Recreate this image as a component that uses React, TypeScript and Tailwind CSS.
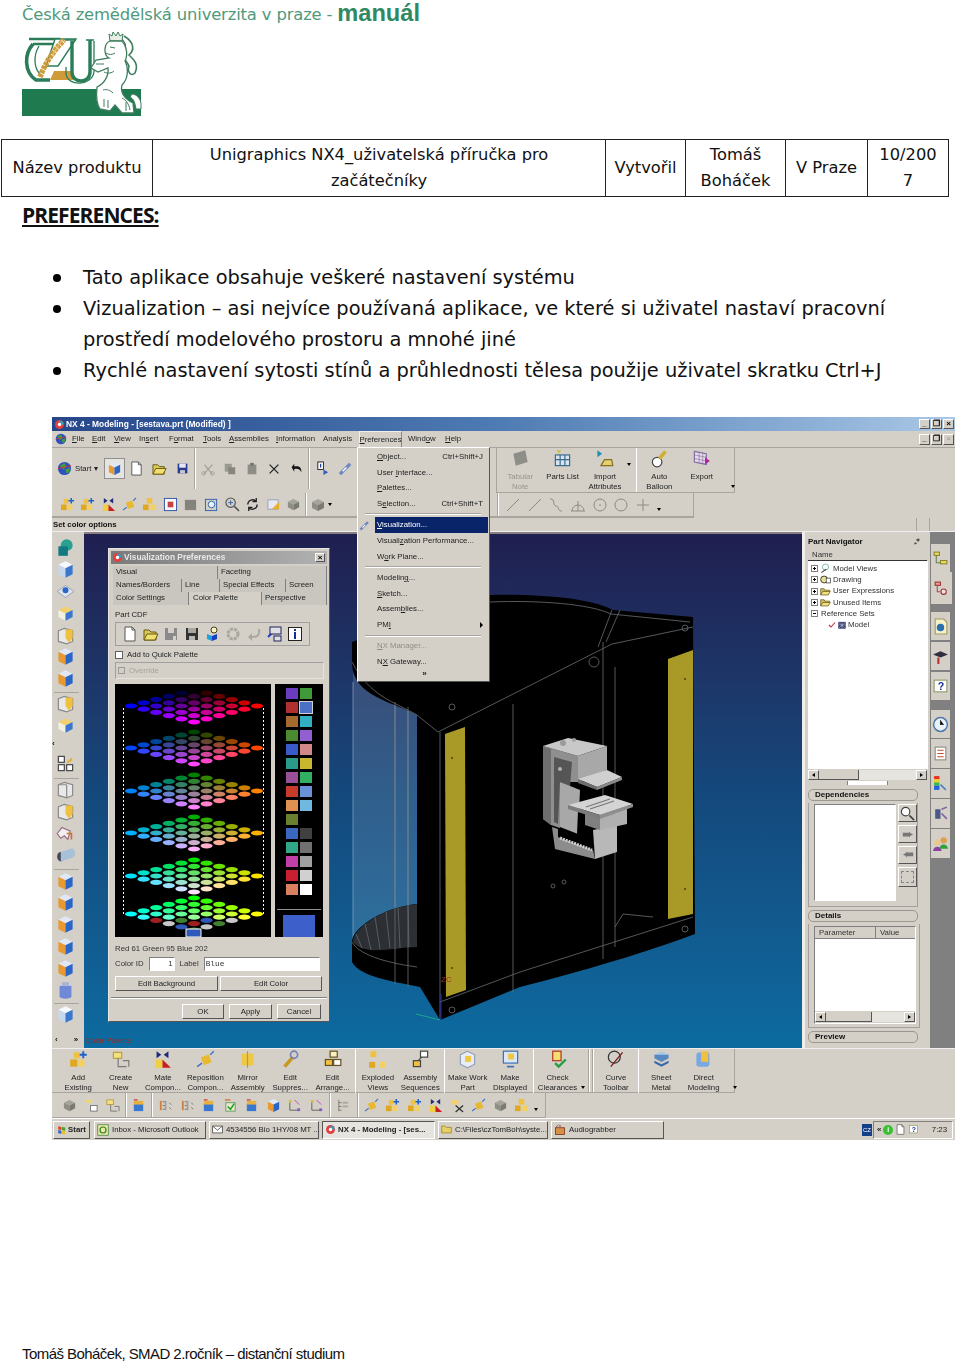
import React from 'react';

const shapes: Record<string, React.ReactNode> = {
    cube: <><path d="M8 1l6 3-6 3-6-3z" fill="#dfe8f4" /><path d="M2 4l6 3v8l-6-3z" fill="#e89a30" /><path d="M14 4l-6 3v8l6-3z" fill="#2a66c8" /></>,
    solid: <><path d="M8 1l6 3-6 3-6-3z" fill="#f4f8ff" /><path d="M2 4l6 3v8l-6-3z" fill="#c8d8ec" /><path d="M14 4l-6 3v8l6-3z" fill="#3a78d0" /></>,
    block: <><path d="M8 2l6 3-6 3-6-3z" fill="#f0d070" /><path d="M2 5l6 3v6l-6-3z" fill="#f4f0e0" /><path d="M14 5l-6 3v6l6-3z" fill="#3a78d0" /></>,
    green: <><circle cx="9" cy="6" r="5" fill="#2aa090" /><rect x="2" y="7" width="8" height="8" fill="#127a80" /></>,
    diamond: <><path d="M8 3l7 5-7 5-7-5z" fill="#e0e4ec" stroke="#8090a8" strokeWidth=".6" /><circle cx="8" cy="7" r="2.5" fill="#2a66c8" /></>,
    tank: <><ellipse cx="8" cy="4" rx="5" ry="2" fill="#d0d8f0" /><path d="M3 4h10v9a5 2 0 01-10 0z" fill="#7088d8" /><rect x="5" y="1" width="6" height="3" fill="#aab4cc" /></>,
    tube: <><ellipse cx="4" cy="9" rx="3" ry="4" fill="#445" /><path d="M4 5l9-3a3 4 0 010 8l-9 3z" fill="#a8c0d8" /></>,
    outline: <><path d="M2 4l5-2 7 2v9l-5 2-7-2z" fill="#e8e8e8" stroke="#8a8a8a" /><path d="M9 4v11M2 4l7 0" stroke="#8a8a8a" fill="none" /></>,
    outlineY: <><path d="M2 4l5-2 7 2v9l-5 2-7-2z" fill="#e8e8e8" stroke="#8a8a8a" /><path d="M8 3h6v7l-3 4-3-4z" fill="#f0c040" /></>,
    chart: <><rect x="2" y="2" width="5" height="5" fill="#fff" stroke="#444" /><rect x="9" y="9" width="5" height="5" fill="#fff" stroke="#444" /><rect x="2" y="9" width="5" height="5" fill="#fff" stroke="#444" /><path d="M9 7l4-4 1 2-4 3z" fill="#e8b030" /></>,
    pipe: <><path d="M1 8l4-5 7 3-2 7-3-3-3 2z" fill="#f0f0f0" stroke="#9a6a80" /><path d="M9 8h4v5" fill="none" stroke="#d07030" strokeWidth="1.4" /></>,
    asm: <><rect x="5" y="1" width="6" height="6" fill="#f0c040" /><rect x="1" y="8" width="6" height="6" fill="#e0a820" /><rect x="9" y="8" width="6" height="6" fill="#f4d060" /></>,
    asmPlus: <><rect x="4" y="2" width="5" height="5" fill="#f0c040" /><rect x="1" y="8" width="6" height="6" fill="#e0a820" /><rect x="8" y="8" width="5" height="6" fill="#f4d060" /><path d="M12 1v6M9 4h6" stroke="#2060c8" strokeWidth="1.6" /></>,
    mate: <><path d="M3 1l4 3-4 3zM13 1l-4 3 4 3z" fill="#202a78" /><rect x="2" y="8" width="6" height="7" fill="#f0d040" /><path d="M8 8l7 7H8z" fill="#c82020" /></>,
    repos: <><rect x="5" y="5" width="7" height="7" fill="#e8b830" transform="rotate(-20 8 8)" /><path d="M1 14l4-3M12 4l3-3" stroke="#4070c8" strokeWidth="1.2" /></>,
    link: <><rect x="2" y="2" width="7" height="5" fill="#f4e080" stroke="#b8a040" /><path d="M6 7v7h7M10 9h5v5" stroke="#7a7a7a" fill="none" /></>,
    mirror: <><rect x="3" y="3" width="10" height="10" fill="#f0c848" /><path d="M8 1v14" stroke="#c89820" /></>,
    wrench: <><path d="M3 14l7-8" stroke="#c89820" strokeWidth="3" /><circle cx="11" cy="4" r="3" fill="none" stroke="#7080b8" strokeWidth="1.4" /></>,
    pin: <path d="M3 13l3-4 3 3-3 1zM7 5l4-3 3 3-3 4z" fill="#555" />,
    arrange: <><rect x="6" y="1" width="6" height="5" fill="#f8f0c0" stroke="#605020" /><rect x="2" y="8" width="6" height="5" fill="#f0c040" stroke="#605020" /><rect x="9" y="8" width="6" height="5" fill="#fff" stroke="#605020" /></>,
    exploded: <><rect x="2" y="1" width="5" height="5" fill="#f0c040" /><rect x="1" y="10" width="5" height="5" fill="#e0a820" /><rect x="10" y="10" width="5" height="5" fill="#f4d060" /></>,
    seq: <><rect x="8" y="1" width="6" height="5" fill="#fff" stroke="#444" /><rect x="2" y="9" width="6" height="5" fill="#f0c040" stroke="#444" /><path d="M9 6L6 9" stroke="#444" /></>,
    work: <><path d="M8 1l6 3v8l-6 3-6-3V4z" fill="#e8ecf4" stroke="#90a0b8" /><rect x="6" y="5" width="5" height="5" fill="#f0c840" /></>,
    display: <><rect x="2" y="1" width="12" height="10" fill="#d8e8f8" stroke="#3a70b8" /><rect x="6" y="3" width="5" height="5" fill="#f0c840" /><path d="M5 14h6" stroke="#3a70b8" strokeWidth="1.4" /></>,
    check: <><rect x="4" y="1" width="7" height="8" fill="#f4e070" stroke="#b03020" /><path d="M6 11l3 3 6-6" stroke="#20a040" strokeWidth="2" fill="none" /></>,
    curve: <><circle cx="7" cy="6" r="5" fill="none" stroke="#333" /><path d="M14 2L4 14" stroke="#802020" strokeWidth="1.2" /></>,
    sheet: <><path d="M8 1l6 3-6 3-6-3z" fill="#a8c8e8" /><path d="M2 4v3l6 3 6-3V4" fill="#5a88c0" /><path d="M2 9l6 3 6-3v2l-6 3-6-3z" fill="#3a68a8" /></>,
    direct: <><rect x="2" y="2" width="11" height="12" rx="2" fill="#7aa8e0" /><rect x="6" y="1" width="6" height="9" fill="#f0c040" /></>,
    doc: <><path d="M3 1h7l3 3v11H3z" fill="#fff" stroke="#555" /><path d="M10 1v3h3" fill="none" stroke="#555" /></>,
    folder: <><path d="M1 14V4h5l2 2h5v8z" fill="#d8c858" stroke="#6a5a10" /><path d="M1 14l3-6h11l-3 6z" fill="#f0e070" stroke="#6a5a10" /></>,
    disk: <><rect x="2" y="2" width="12" height="12" fill="#2a3a90" /><rect x="4" y="2" width="8" height="5" fill="#e8e8f0" /><rect x="5" y="10" width="6" height="4" fill="#c8c8c8" /></>,
    diskDim: <><rect x="2" y="2" width="12" height="12" fill="#8a8a8a" /><rect x="5" y="2" width="6" height="5" fill="#d4d0c8" /><rect x="10" y="10" width="3" height="4" fill="#d4d0c8" /></>,
    diskDark: <><rect x="2" y="2" width="12" height="12" fill="#333" /><rect x="4" y="2" width="8" height="5" fill="#a8a8a0" /><rect x="5" y="10" width="6" height="4" fill="#b8b8b0" /></>,
    earth: <><circle cx="8" cy="8" r="7" fill="#3050c0" /><path d="M3 5l5-3 2 4-3 3zM9 9l5-2-1 5-3 1z" fill="#40a040" /><path d="M1 8l14-3" stroke="#e03020" /></>,
    scissors: <><path d="M3 14L13 3M4 3l9 11" stroke="#9a9a92" strokeWidth="1.2" /><circle cx="3" cy="13" r="2" fill="none" stroke="#9a9a92" /><circle cx="13" cy="13" r="2" fill="none" stroke="#9a9a92" /></>,
    copy: <><rect x="2" y="2" width="8" height="9" fill="#9a9a92" /><rect x="6" y="6" width="8" height="8" fill="#86867e" /></>,
    paste: <><rect x="3" y="3" width="10" height="11" fill="#8e8e86" /><rect x="6" y="1" width="4" height="3" fill="#70706a" /></>,
    cross: <path d="M3 3l10 10M13 3L3 13" stroke="#222" strokeWidth="1.5" />,
    undo: <path d="M3 6l3-4v3c5-1 9 1 8 7-1-4-4-5-8-4v3z" fill="#111" />,
    info: <><rect x="3" y="1" width="6" height="8" fill="#fff" stroke="#222" /><path d="M6 3v4" stroke="#2040a0" strokeWidth="1.4" /><path d="M9 9l5 3-5 3z" fill="#3060c0" /></>,
    wand: <><path d="M2 14L13 3" stroke="#7088c0" strokeWidth="3.5" /><path d="M5 11l4-4" stroke="#fff" strokeWidth="1.5" /></>,
    gray: <><path d="M8 2l6 3-6 3-6-3z" fill="#a4a49c" /><path d="M2 5l6 3v6l-6-3z" fill="#8e8e86" /><path d="M14 5l-6 3v6l6-3z" fill="#7a7a72" /></>,
    grayFlat: <rect x="2" y="3" width="12" height="11" fill="#84847c" />,
    view: <><rect x="1.5" y="1.5" width="13" height="13" fill="#f4f8ff" stroke="#3050a0" /><rect x="5" y="5" width="6" height="6" fill="#c84040" /></>,
    zoom: <><rect x="1.5" y="2.5" width="12" height="12" fill="#d0d0c8" stroke="#3060a8" /><circle cx="8" cy="8" r="3.5" fill="#e8f0f8" stroke="#3060a8" /></>,
    magnify: <><circle cx="6" cy="6" r="5" fill="none" stroke="#505050" strokeWidth="1.2" /><path d="M3.5 6h5M6 3.5v5" stroke="#3060a8" /><path d="M10 10l5 5" stroke="#505050" strokeWidth="1.6" /></>,
    lens: <><circle cx="6" cy="6" r="4.5" fill="#fff" stroke="#404040" strokeWidth="1.2" /><path d="M10 10l5 5" stroke="#404040" strokeWidth="1.8" /></>,
    rotate: <path d="M3 8a5 5 0 019-3M13 8a5 5 0 01-9 3M12 1v4H8M4 15v-4h4" fill="none" stroke="#222" strokeWidth="1.4" />,
    shade: <><rect x="2" y="3" width="11" height="10" fill="#e8e8f0" stroke="#90a0c0" /><path d="M6 13L14 5v8z" fill="#e8b030" /></>,
    line: <path d="M2 14L14 2" stroke="#8a8a84" strokeWidth="1" />,
    wave: <path d="M2 2c6 0 2 6 6 7s1 5 6 5" stroke="#8a8a84" fill="none" />,
    ccross: <><path d="M2 14a6 6 0 0112 0" stroke="#8a8a84" fill="none" /><path d="M8 4v10M1 14h14" stroke="#8a8a84" /></>,
    ring: <><circle cx="8" cy="8" r="6" stroke="#8a8a84" fill="none" /><circle cx="8" cy="8" r=".8" fill="#8a8a84" /></>,
    ringOnly: <circle cx="8" cy="8" r="6" stroke="#8a8a84" fill="none" />,
    plus: <path d="M8 2v12M2 8h12" stroke="#8a8a84" />,
    tabular: <path d="M2 4l10-3 2 10-10 3z" fill="#8e8e88" />,
    parts: <><rect x="2" y="5" width="12" height="9" fill="#d8e4f0" stroke="#3a6a8a" /><path d="M6 5v9M10 5v9M2 9h12" stroke="#3a6a8a" /><path d="M3 1l2 3 2-3" fill="#c8c040" /></>,
    importAttr: <><path d="M2 1l4 3-4 3z" fill="#2090b0" /><path d="M5 14l3-5h6l1 5z" fill="#e8d070" stroke="#807020" /></>,
    balloon: <><circle cx="6" cy="11" r="4" fill="#fff" stroke="#444" /><path d="M8 8l5-6" stroke="#d0b030" strokeWidth="3" /></>,
    exportI: <><path d="M2 2l10 2v9L2 11z" fill="#e8d8e8" stroke="#8070a0" /><path d="M2 5l10 2M2 8l10 2M6 3v9M9 3v10" stroke="#8070a0" strokeWidth=".5" /><path d="M11 7l4 3-4 3z" fill="#b020a0" /></>,
    wavelink: <><rect x="7" y="8" width="7" height="6" fill="#fff" stroke="#777" /><path d="M2 2h6v3H2z" fill="#f0d870" /></>,
    links: <><rect x="2" y="3" width="2" height="10" fill="#d08040" /><rect x="7" y="3" width="2" height="10" fill="#a0a098" /><path d="M5 4h2M5 8h2M5 12h2M12 5l2 2M12 10l2 2" stroke="#707068" /></>,
    stamp: <><rect x="3" y="6" width="10" height="8" fill="#3a78d0" /><rect x="3" y="3" width="10" height="4" fill="#e8b040" /><path d="M3 2h4" stroke="#d04040" strokeWidth="1.4" /></>,
    checked: <><rect x="3" y="5" width="10" height="9" fill="#e8e8d0" stroke="#60a060" /><path d="M5 9l3 3 4-6" stroke="#20a020" strokeWidth="1.6" fill="none" /><path d="M2 2h6" stroke="#d07030" strokeWidth="1.4" /></>,
    tree: <><path d="M3 3v10h10" stroke="#606060" fill="none" /><rect x="2" y="2" width="3" height="3" fill="#d8c040" /><rect x="11" y="11" width="3" height="3" fill="#8060c0" /><path d="M8 2l5 5" stroke="#c040c0" /></>,
    treeList: <><path d="M3 2v12M3 5h3M3 9h3M3 13h3" stroke="#7a7a72" /><rect x="7" y="4" width="6" height="2" fill="#a8a8a0" /><rect x="7" y="8" width="6" height="2" fill="#a8a8a0" /></>,
    cutX: <><rect x="2" y="2" width="7" height="5" fill="#f4d070" /><path d="M6 8l8 7M14 8l-8 7" stroke="#303030" strokeWidth="1.3" /></>,
    help: <><rect x="2" y="2" width="12" height="11" fill="#fff" stroke="#8a9a60" /><text x="5.5" y="11" fontSize="10" fontWeight="700" fontFamily="Liberation Sans" fill="#1830a0">?</text></>,
    globe: <><path d="M3 1h8l3 3v11H3z" fill="#f4f0c8" stroke="#a09860" /><circle cx="8" cy="9" r="3.5" fill="#2a70b0" /></>,
    cap: <><path d="M8 3l7 3-7 3-7-3z" fill="#303040" /><path d="M6 9v6" stroke="#c03030" strokeWidth="2" /></>,
    clock: <><circle cx="8" cy="8" r="6.5" fill="#e8f0f8" stroke="#5078a8" strokeWidth="1.4" /><path d="M8 4v4h3" stroke="#303030" /></>,
    list: <><rect x="3" y="2" width="10" height="12" fill="#fff" stroke="#8a8a82" /><path d="M5 5h6M5 8h6M5 11h6" stroke="#c05030" /></>,
    rainbow: <><rect x="2" y="1" width="5" height="3" fill="#e83020" /><rect x="2" y="4" width="5" height="3" fill="#f0d020" /><rect x="2" y="7" width="5" height="3" fill="#30c040" /><rect x="2" y="10" width="5" height="4" fill="#2060e0" /><path d="M8 9l5 5" stroke="#5080c0" strokeWidth="1.5" /></>,
    kin: <><rect x="3" y="4" width="5" height="9" fill="#4a5a88" /><path d="M9 4l5-2M9 8l5 5" stroke="#8060a0" strokeWidth="1.5" /></>,
    users: <><circle cx="5" cy="7" r="3" fill="#e8c890" /><path d="M1 15a4 4 0 018 0z" fill="#9040a0" /><circle cx="11" cy="5" r="3" fill="#e0a050" /><path d="M7 13a4 4 0 018 0z" fill="#30a040" /></>,
    treeGreen: <><rect x="2" y="2" width="5" height="3" fill="#f0e070" stroke="#8a8020" /><rect x="8" y="10" width="6" height="3" fill="#f0e070" stroke="#8a8020" /><path d="M4 5v7h4" stroke="#608050" fill="none" /></>,
    treeRed: <><rect x="2" y="2" width="5" height="3" fill="#e0a0a0" stroke="#a03030" /><circle cx="10" cy="11" r="2.5" fill="#f0e0e0" stroke="#a03030" /><path d="M4 5v6h3" stroke="#a05050" fill="none" /></>,
    views: <><circle cx="8" cy="6" r="4.5" fill="none" stroke="#50a080" /><path d="M2 14l7-5" stroke="#303030" strokeWidth="1.5" /></>,
    drawing: <><circle cx="6" cy="8" r="5" fill="#e8e0a0" stroke="#404020" strokeWidth="1.4" /><rect x="9" y="6" width="6" height="7" fill="#fff" stroke="#303030" /></>,
    folderOpen: <><path d="M1 13V4h5l1 2h7v2" fill="#d0c060" stroke="#605010" /><path d="M1 13l3-5h11l-3 5z" fill="#f0e080" stroke="#605010" /></>,
    model: <><path d="M2 3h12v11H2z" fill="#303868" /><path d="M2 3l12 11M14 3L2 14M8 3v11M2 8h12" stroke="#e0e0f0" strokeWidth=".7" /></>,
    tick: <path d="M2 8l4 4 8-9" stroke="#c03040" strokeWidth="2.2" fill="none" />,
    outlook: <><rect x="1" y="1" width="14" height="14" fill="#e8e8a0" stroke="#408040" /><circle cx="8" cy="8" r="4" fill="none" stroke="#308030" strokeWidth="1.6" /></>,
    mail: <><rect x="1" y="3" width="14" height="10" fill="#fff" stroke="#303030" /><path d="M1 3l7 6 7-6" fill="none" stroke="#303030" /></>,
    nx: <><circle cx="8" cy="8" r="6.5" fill="#e04040" /><path d="M8 2a6 6 0 016 6H8z" fill="#30a0c0" /><circle cx="8" cy="8" r="2.5" fill="#fff" /></>,
    winFolder: <path d="M1 13V3h5l2 2h7v8z" fill="#e8d068" stroke="#907818" />,
    grabber: <><rect x="2" y="5" width="12" height="9" fill="#d89048" stroke="#702810" /><path d="M3 4l3-3M8 4V1" stroke="#702810" /></>,
    flag: <><path d="M2 2l5 1v5l-5-1z" fill="#e04020" /><path d="M8 3l5 1v5l-5-1z" fill="#40a030" /><path d="M2 8l5 1v5l-5-1z" fill="#3060d0" /><path d="M8 9l5 1v5l-5-1z" fill="#e8c020" /></>,
    partCdf: <><path d="M2 11l6-6 3 1" stroke="#2040d0" fill="none" strokeWidth="2" /><rect x="4" y="1" width="11" height="7" fill="#e0e0e0" stroke="#202060" /><rect x="8" y="10" width="7" height="5" fill="#e0e0e0" stroke="#202060" /></>,
    spiral: <circle cx="8" cy="8" r="5" fill="none" stroke="#a8a8a0" strokeWidth="3" strokeDasharray="3 1" />,
    back: <path d="M12 3c1 5-1 7-6 7V7l-4 4 4 4v-3c6 0 9-3 8-9z" fill="#a8a8a0" />,
    boxInfo: <><rect x="1.5" y="1.5" width="13" height="13" fill="#fff" stroke="#222" /><rect x="7" y="3" width="2" height="2" fill="#1030a0" /><rect x="7" y="6" width="2" height="7" fill="#1030a0" /></>,
    cubeHelp: <><path d="M3 8l5 2v5l-5-2z" fill="#20a0e0" /><path d="M8 10l5-2v5l-5 2z" fill="#1840c0" /><circle cx="10" cy="4" r="3" fill="#f8f0c0" stroke="#404020" /></>,
};

const Ico: React.FC<{ k: string; s?: number }> = ({ k, s = 14 }) => (
    <svg width={s} height={s} viewBox="0 0 16 16" className="shrink-0">{shapes[k]}</svg>
);

// little down arrow that ends a toolbar
const Drop = () => <span className="block w-0 h-0 border-x-[2px] border-t-[3px] border-x-transparent border-t-black" />;

const Mn: React.FC<{ t: string }> = ({ t }) => {
    const i = t.indexOf('&');
    if (i < 0) return <>{t}</>;
    return <>{t.slice(0, i)}<u>{t[i + 1]}</u>{t.slice(i + 2)}</>;
};

const Logo = () => (
    <svg width="120" height="85" viewBox="22 32 120 85">
        <rect x="22" y="89" width="119" height="27" fill="#1f7a50" />
        {/* C */}
        <path d="M29 39H59V44H33" fill="none" stroke="#2a7d58" strokeWidth="2.4" />
        <path d="M33 44C24 54 24 72 36 80H50" fill="none" stroke="#2a7d58" strokeWidth="3.6" />
        <path d="M39 46C33 56 34 68 40 74" fill="none" stroke="#2a7d58" strokeWidth="1.3" />
        {/* Z with the wheat */}
        <path d="M55 39H76L58 66H46Z" fill="#fff" stroke="#2a7d58" strokeWidth="1.4" />
        <path d="M40 77C44 66 52 52 64 40" fill="none" stroke="#cf9a3a" strokeWidth="5.5" strokeDasharray="3.5 .8" />
        <path d="M62 40L52 56" fill="none" stroke="#e8c070" strokeWidth="1.2" />
        <path d="M54 71H73V80H50Z" fill="#cf9a3a" />
        {/* U */}
        <path d="M72 41V72C72 84 90 84 90 72V40" fill="none" stroke="#2a7d58" strokeWidth="3.4" />
        <path d="M65 40H76M86 40H94M66 67V74C68 87 92 86 94 72V41" fill="none" stroke="#2a7d58" strokeWidth="1.3" />
        {/* lion */}
        <path d="M124 36C134 42 135 50 129 55C134 60 139 64 135 73C131 77 127 72 129 66C126 60 122 58 124 52C127 46 126 42 120 38" fill="none" stroke="#3f7d5e" strokeWidth="1.6" />
        <path d="M110 41H122L123 34L120 36L118 32L116 36L113 32L112 36L109 34Z" fill="#e6eee6" stroke="#3f7d5e" />
        <path d="M110 41C104 43 103 55 109 58L96 60L91 68L98 72L108 68C109 76 104 84 97 87C96 96 96 103 100 109L110 111L115 105L122 113L134 113L133 103C125 99 120 93 122 85C128 79 129 69 125 61C129 53 125 43 121 41Z" fill="#fff" stroke="#3f7d5e" strokeWidth="1.3" />
        <path d="M110 47l5 1M106 53c3 2 6 2 9 0M96 64h8M104 72c4 2 8 1 10-1M103 90c4-1 7 0 10 3M104 99v8M108 100v8M122 98c4 2 7 6 8 12M126 102v9" fill="none" stroke="#3f7d5e" strokeWidth="1" />
        <path d="M132 94C136 94 140 98 141 103V109H136C135 103 134 99 130 97Z" fill="#fff" stroke="#3f7d5e" />
    </svg>
);

const TableCell: React.FC<{ className: string; children: React.ReactNode }> = ({ className, children }) => (
    <div className={`flex items-center justify-center text-center leading-[26px] border-r-[1.5px] border-[#222] last:border-r-0 ${className}`}>{children}</div>
);

const bullets = [
    'Tato aplikace obsahuje veškeré nastavení systému',
    'Vizualization – asi nejvíce používaná aplikace, ve které si uživatel nastaví pracovní prostředí modelového prostoru a mnohé jiné',
    'Rychlé nastavení sytosti stínů a průhlednosti tělesa použije uživatel skratku Ctrl+J',
];

const menuBar = [
    ['&File', 'w-[20px]'], ['&Edit', 'w-[22px]'], ['&View', 'w-[25px]'], ['In&sert', 'w-[30px]'], ['F&ormat', 'w-[34px]'],
    ['&Tools', 'w-[26px]'], ['&Assemblies', 'w-[47px]'], ['&Information', 'w-[47px]'], ['Analysis', 'w-[35px]'],
];

const prefMenu: (string | { t: string; r?: string; dim?: boolean; sel?: boolean; arrow?: boolean })[] = [
    { t: '&Object...', r: 'Ctrl+Shift+J' }, { t: 'User &Interface...' }, { t: '&Palettes...' }, { t: 'S&election...', r: 'Ctrl+Shift+T' }, 'sep',
    { t: '&Visualization...', sel: true }, { t: 'Visuali&zation Performance...' }, { t: 'W&ork Plane...' }, 'sep',
    { t: 'Modelin&g...' }, { t: '&Sketch...' }, { t: 'Assem&blies...' }, { t: 'PM&I', arrow: true }, 'sep',
    { t: '&NX Manager...', dim: true }, { t: 'N&X Gateway...' },
];

const leftBar: string[] = [
    'green', 'solid', 'diamond', 'block', 'outlineY', 'cube', 'cube', 'sep3', 'outlineY', 'block', 'arrow', 'chart', 'sep5',
    'outline', 'outlineY', 'pipe', 'tube', 'sep4', 'cube', 'cube', 'cube', 'cube', 'cube', 'tank', 'sep3', 'solid',
];

const lowerTools: ([string, string, string] | string)[] = [
    ['asmPlus', 'Add', 'Existing'], ['link', 'Create', 'New'], ['mate', 'Mate', 'Compon...'], ['repos', 'Reposition', 'Compon...'],
    ['mirror', 'Mirror', 'Assembly'], ['wrench', 'Edit', 'Suppres...'], ['arrange', 'Edit', 'Arrange...'], 'sep',
    ['exploded', 'Exploded', 'Views'], ['seq', 'Assembly', 'Sequences'], 'sepw',
    ['work', 'Make Work', 'Part'], ['display', 'Make', 'Displayed'], 'sepw', ['check', 'Check', 'Clearances'],
];

const lowerRow2: (string | null)[] = [
    'gray', 'wavelink', 'link', null, 'stamp', null, 'links', 'links', 'stamp', 'checked', 'stamp', 'cube', 'tree', 'tree', null, 'treeList', null,
    'repos', 'asmPlus', 'asmPlus', 'mate', 'cutX', 'repos', 'gray', 'asm',
];

const swatches: [string, string | null][] = [
    ['#6a3cc0', '#3f9a3a'], ['#b03030', '#4a70c8'], ['#a56a30', '#30b0c0'], ['#4a8a30', '#9060d0'], ['#3a5ac8', '#d08888'],
    ['#2a9a8a', '#c8b830'], ['#9a5098', '#30b060'], ['#c83a2a', '#6a90d8'], ['#e09050', '#70b8e0'], ['#6a8030', null],
    ['#3a68c0', '#404040'], ['#30a888', '#707070'], ['#c040a8', '#a0a0a0'], ['#c82030', '#d0d0d0'], ['#d88060', '#ffffff'],
];

// 6x6 colour cube, one diamond per green level
const Palette = () => {
    const levels = [[22, 0], [64, 70], [107, 130], [149, 175], [192, 225], [230, 255]];
    const dots: React.ReactNode[] = [];
    levels.forEach(([cy, g], k) => {
        for (let r = 0; r < 6; r++) {
            for (let b = 0; b < 6; b++) {
                const cx = 79 + (r - b) * 12.6;
                const y = cy + (r + b - 5) * 3.2;
                let fill = `rgb(${r * 51},${g},${b * 51})`;
                if (k === 5 && r + b > 6) fill = ['#a02020', '#c8c8c8', '#3058b8', '#408030'][(r + 2 * b) % 4];
                dots.push(<ellipse key={`${k}-${r}-${b}`} cx={cx} cy={y} rx="6" ry="2.6" fill={fill} />);
            }
        }
    });
    return (
        <svg width="156" height="253" viewBox="0 0 156 253" className="bg-black">
            <path d="M8.5 24V232M148.5 24V232" stroke="#fff" strokeDasharray="2 2" />
            {dots}
            <rect x="71" y="245" width="15" height="8" fill="#3058b8" stroke="#fff" />
        </svg>
    );
};

const Btn: React.FC<{ className: string; children?: React.ReactNode }> = ({ className, children }) => (
    <div className={`flex items-center justify-center whitespace-nowrap bg-[#d4d0c8] border border-t-white border-l-white border-r-[#555] border-b-[#555] ${className}`}>{children}</div>
);

const PlusBox: React.FC<{ minus?: boolean }> = ({ minus }) => (
    <span className="w-[7px] h-[7px] border border-[#808080] relative shrink-0">
        <span className="absolute left-[1px] top-[2px] w-[3px] h-px bg-black" />
        {!minus && <span className="absolute left-[2px] top-[1px] w-px h-[3px] bg-black" />}
    </span>
);

const treeRows: [string, string][] = [['views', 'Model Views'], ['drawing', 'Drawing'], ['folderOpen', 'User Expressions'], ['folderOpen', 'Unused Items']];

const tabs: [string, string][] = [
    ['treeGreen', 'h-[28px] mt-[12px]'], ['treeRed', 'h-[32px] w-[21px]'], ['globe', 'h-[28px] mt-[8px]'], ['cap', 'h-[28px] mt-[2px]'], ['help', 'h-[28px] mt-[2px]'],
    ['clock', 'h-[28px] mt-[10px]'], ['list', 'h-[29px] mt-px'], ['rainbow', 'h-[29px] mt-px'], ['kin', 'h-[29px] mt-px'], ['users', 'h-[29px] mt-px'],
];

const Scrollbar: React.FC<{ thumb: string }> = ({ thumb }) => (
    <div className="h-[12px] flex bg-[#e6e4df] border-y border-[#d4d0c8]">
        <Btn className="w-[11px] h-full"><span className="border-y-[2px] border-r-[3px] border-y-transparent border-r-black" /></Btn>
        <div className={`h-full bg-[#d4d0c8] border-r border-b border-[#555] ${thumb}`} />
        <div className="flex-1" />
        <Btn className="w-[11px] h-full"><span className="border-y-[2px] border-l-[3px] border-y-transparent border-l-black" /></Btn>
    </div>
);

const SectionHead: React.FC<{ t: string; className?: string }> = ({ t, className = '' }) => (
    <div className={`h-[12px] rounded-[5px] border border-[#9a9890] font-bold text-[#111] text-[8px] leading-[10px] pl-[6px] shrink-0 ${className}`}>{t}</div>
);

const Model = () => (
    <svg className="absolute left-0 top-0" width="718" height="516" viewBox="84 532 718 516">
        {/* glass front */}
        <path d="M353 660C370 695 395 700 417 713V902C385 905 353 925 353 940Z" fill="#fff" fillOpacity=".12" />
        <path d="M395 700V905M408 706V903M353 680V940" stroke="#9fb4c4" strokeOpacity=".6" fill="none" />
        {/* body */}
        <path d="M490 593C540 592 590 596 613 608L693 615L695 932C660 945 600 965 520 985L440 1018L420 985C395 980 360 975 352 960V940C352 925 385 905 417 902V713C395 700 352 695 352 660L352 640L489 593Z" fill="#000" />
        {/* floor of the glass part */}
        <path d="M353 940C353 925 385 905 417 902V945C395 945 365 955 353 940Z" fill="#2c2f33" />
        <path d="M356 932l6 14M365 922l6 26M375 915l5 32M386 910l4 36M398 905l2 41M408 903l1 42" stroke="#5a5d60" />
        {/* edges */}
        <g fill="none" stroke="#6a6e72" strokeWidth=".8">
            <path d="M490 600C540 598 590 602 611 612L690 620" />
            <path d="M417 713L438 730L612 642L693 625" />
            <path d="M440 730V1018M513 702V990M603 640V957M615 665V945" />
            <path d="M440 1000L520 970L693 915M395 700V982M408 705V985" />
            <path d="M612 608L598 645M620 608L606 640" />
            <path d="M352 940C360 955 395 962 417 965M352 660C370 695 395 700 417 713" />
            <path d="M615 925l8-13 30 3" />
            <circle cx="594" cy="660" r="5" />
            <circle cx="452" cy="705" r="3" />
            <circle cx="685" cy="626" r="3" />
            <circle cx="685" cy="927" r="3" />
            <circle cx="452" cy="1008" r="3" />
            <circle cx="553" cy="884" r="2" />
            <circle cx="564" cy="880" r="2" />
        </g>
        {/* yellow plates */}
        <path d="M668 657L693 648L693 912L668 917Z" fill="#a99a28" />
        <path d="M445 732L465 725L466 988L446 995Z" fill="#a99a28" />
        <g fill="#4a4510">
            <circle cx="685" cy="677" r="1" /><circle cx="685" cy="887" r="1" /><circle cx="452" cy="756" r="1" /><circle cx="452" cy="966" r="1" />
        </g>
        {/* the machine in the middle */}
        <path d="M543 744L578 754V780L560 780V826L551 823L543 817Z" fill="#8f8f8f" />
        <path d="M543 744L551 747V823L543 817Z" fill="#6e6e6e" />
        <path d="M543 744L568 736L607 744L578 754Z" fill="#c8c8c8" />
        <circle cx="563" cy="741" r="3" fill="#9a9a9a" /><circle cx="574" cy="738" r="2" fill="#a4a4a4" />
        <path d="M578 754L607 744V768L578 780Z" fill="#a8a8a8" />
        <path d="M554 755L572 760L570 785L560 780L558 822L554 820Z" fill="#555" />
        <circle cx="560" cy="767" r="2" fill="#b0b0b0" />
        <path d="M560 780L580 788L578 832L560 825Z" fill="#a8a8a8" />
        <path d="M578 809L593 821L589 833L577 832Z" fill="#000" />
        <path d="M578 777L607 768L622 775L597 785Z" fill="#d0d0d0" />
        <path d="M578 777L597 785V788L578 781Z" fill="#6e6e6e" />
        <path d="M597 785L622 775V778L597 788Z" fill="#8a8a8a" />
        <path d="M593 828L617 823V850L595 857Z" fill="#b8b8b8" />
        <path d="M585 811L600 816V828L585 823Z" fill="#808080" />
        <path d="M600 813L627 804V822L600 828Z" fill="#b0b0b0" />
        <path d="M568 803L605 793L633 802L600 813Z" fill="#d4d4d4" />
        <path d="M568 803L600 813V817L568 807Z" fill="#7c7c7c" />
        <path d="M600 813L633 802V805L600 817Z" fill="#8e8e8e" />
        <path d="M586 805L610 797M590 807L614 799" stroke="#777" strokeWidth="1.2" />
        <path d="M552 825L558 827V835L593 848L595 857L555 847Z" fill="#8c8c8c" />
        <path d="M560 836L592 848" stroke="#cfcfcf" strokeDasharray="2 1" strokeWidth="3" />
        {/* axes */}
        <path d="M440 1018L416 1012" stroke="#1fa58a" />
        <path d="M441 1018V992" stroke="#2030c0" />
        <text x="441" y="980" fontSize="8" fill="#a03020" fontFamily="Liberation Sans">ZC</text>
    </svg>
);

const DialogTab: React.FC<{ t: string; className: string }> = ({ t, className }) => (
    <div className={`h-[13px] bg-[#c9c6bf] border-r border-[#808080] px-[3px] leading-[12px] text-[#222] whitespace-nowrap ${className}`}>{t}</div>
);

const VisDialog = () => (
    <div className="absolute left-[24px] top-[14px] w-[222px] h-[474px] bg-[#d4d0c8] border border-t-[#e8e6e0] border-l-[#e8e6e0] border-[#555] p-[2px] flex flex-col">
        <div className="h-[13px] shrink-0 flex items-center pl-[1px] pr-[2px] bg-linear-to-r from-[#7a7a7a] to-[#b2b2b2]">
            <Ico k="nx" s={11} />
            <span className="ml-px font-bold text-[#e8e8e8] text-[8.4px]">Visualization Preferences</span>
            <Btn className="ml-auto w-[10px] h-[9px] text-[8px] leading-none font-bold text-black">×</Btn>
        </div>
        <div className="mt-[2px] pl-[2px] flex flex-col gap-0 shrink-0">
            <div className="flex"><DialogTab t="Visual" className="w-[105px]" /><DialogTab t="Faceting" className="w-[109px]" /></div>
            <div className="flex"><DialogTab t="Names/Borders" className="w-[69px]" /><DialogTab t="Line" className="w-[38px]" /><DialogTab t="Special Effects" className="w-[66px]" /><DialogTab t="Screen" className="w-[41px]" /></div>
            <div className="flex">
                <DialogTab t="Color Settings" className="w-[76px]" />
                <div className="h-[13px] w-[72px] px-[3px] leading-[11px] bg-[#d4d0c8] text-[#222] pl-[4px]">Color Palette</div>
                <DialogTab t="Perspective" className="w-[66px] border-l" />
            </div>
        </div>
        <div className="mt-[4px] pl-[4px] flex flex-col flex-1 min-h-0">
            <div className="leading-[12px] text-[#222]">Part CDF</div>
            <div className="mt-[1px] w-[195px] h-[24px] border border-[#a0a0a0] flex items-center justify-around px-[4px]">
                {['doc', 'folder', 'diskDim', 'diskDark', 'cubeHelp', 'spiral', 'back', 'partCdf', 'boxInfo'].map((k, i) => <Ico key={i} k={k} s={16} />)}
            </div>
            <div className="mt-[3px] h-[11px] flex items-center gap-[4px]">
                <span className="w-[8px] h-[8px] bg-white border border-[#606060]" />
                <span className="text-[#222]">Add to Quick Palette</span>
            </div>
            <div className="mt-[2px] mr-[3px] h-[17px] border border-[#e4e2dc] border-l-[#a0a0a0] border-t-[#a0a0a0] flex items-center gap-[4px] pl-[2px]">
                <span className="w-[7px] h-[7px] border border-[#999]" />
                <span className="text-[#a4a29c]">Override</span>
            </div>
            <div className="mt-[5px] flex gap-[4px]">
                <Palette />
                <div className="w-[48px] h-[253px] bg-black flex flex-col items-center pt-[4px]">
                    <div className="grid grid-cols-[12px_12px] gap-x-[2px] gap-y-[3px] auto-rows-[11px]">
                        {swatches.flat().map((c, i) => c ? <div key={i} className={i === 3 ? 'outline outline-[#d0d0d0]' : ''} style={{ backgroundColor: c }} /> : <div key={i} />)}
                    </div>
                    <div className="mt-[14px] w-[44px] h-px bg-[#909090]" />
                    <div className="mt-[5px] w-[32px] h-[22px] bg-[#3d5fca]" />
                </div>
            </div>
            <div className="mt-[6px] leading-[11px] text-[#333]">Red 61 Green 95 Blue 202</div>
            <div className="mt-[2px] h-[15px] flex items-center gap-[5px] text-[#333]">
                <span>Color ID</span>
                <div className="w-[26px] h-[14px] bg-white border border-t-[#808080] border-l-[#808080] border-white text-right pr-[1px] leading-[12px]">1</div>
                <span>Label</span>
                <div className="w-[116px] h-[14px] bg-white border border-t-[#808080] border-l-[#808080] border-white pl-[1px] leading-[12px] font-['Liberation_Mono',monospace]">Blue</div>
            </div>
            <div className="mt-[5px] flex gap-[2px]">
                <Btn className="w-[103px] h-[15px] text-[#222]">Edit Background</Btn>
                <Btn className="w-[102px] h-[15px] text-[#222]">Edit Color</Btn>
            </div>
            <div className="mt-[6px] -ml-[4px] h-[2px] border-t border-b border-t-[#808080] border-b-white" />
            <div className="mt-[5px] flex justify-end gap-[5px] pr-[6px]">
                <Btn className="w-[42px] h-[15px] border-r-[#222] border-b-[#222] border-t-[#222] border-l-[#222] text-[#222]">OK</Btn>
                <Btn className="w-[43px] h-[15px] text-[#222]">Apply</Btn>
                <Btn className="w-[44px] h-[15px] text-[#222]">Cancel</Btn>
            </div>
        </div>
    </div>
);

const PrefMenu = () => (
    <div className="absolute left-[305px] top-[30px] w-[133px] h-[235px] bg-[#d4d0c8] border border-t-white border-l-white border-r-[#555] border-b-[#555] pt-[1px] z-10 text-[#1c1c1c] whitespace-nowrap">
        {prefMenu.map((m, i) =>
            typeof m === 'string' ? (
                <div key={i} className="ml-[7px] mr-[8px] my-[2px] h-[2px] bg-[#a8a59e] border-b border-white" />
            ) : (
                <div key={i} className="h-[15.6px] flex items-center relative">
                    {m.sel && <span className="absolute left-[1px]"><Ico k="wand" s={11} /></span>}
                    <div className={`ml-[17px] mr-px h-full flex-1 flex items-center pl-[2px] pr-[5px] ${m.sel ? 'bg-[#0a246a] text-white' : ''} ${m.dim ? 'text-[#8f8d88]' : ''}`}>
                        <span><Mn t={m.t} /></span>
                        {m.r && <span className="ml-auto">{m.r}</span>}
                        {m.arrow && <span className="ml-auto border-y-[3px] border-l-[3px] border-y-transparent border-l-black" />}
                    </div>
                </div>
            ),
        )}
        <div className="text-center font-bold text-[8px] leading-[8px] pl-[2px]">»</div>
    </div>
);

const TopTool: React.FC<{ k: string; a: string; b?: string; dim?: boolean; className?: string }> = ({ k, a, b, dim, className = '' }) => (
    <div className={`w-[42.4px] flex flex-col items-center text-center leading-[9.5px] shrink-0 whitespace-nowrap ${dim ? 'text-[#97958e]' : 'text-[#222]'} ${className}`}>
        <Ico k={k} s={19} />
        <span className="mt-[4px]">{a}</span>
        <span>{b}</span>
    </div>
);

const Sep = () => <div className="w-[2px] self-stretch bg-[#a8a59e] border-r border-white mx-[1px] shrink-0" />;
const Sep2 = () => <div className="w-[2px] self-stretch bg-[#a8a59e] border-r border-white mx-[2px] shrink-0" />;

const Screenshot = () => (
    <div className="relative ml-[52px] w-[903px] h-[723px] bg-[#d4d0c8] flex flex-col overflow-hidden text-[7.8px] font-['Liberation_Sans',sans-serif] blur-[0.35px]">
        {/* title bar */}
        <div className="h-[14px] shrink-0 flex items-center bg-linear-to-r from-[#26468a] via-[#4f7cb4] to-[#aac8e6] pl-[2px] pr-[1px]">
            <Ico k="nx" s={11} />
            <span className="text-white font-bold text-[8.4px] ml-px">NX 4 - Modeling - [sestava.prt (Modified) ]</span>
            <div className="ml-auto flex gap-px">
                {['_', '❐', '×'].map((t) => <Btn key={t} className="w-[11px] h-[10px] text-[8px] leading-none font-bold text-black">{t}</Btn>)}
            </div>
        </div>
        {/* menu bar */}
        <div className="h-[16px] shrink-0 flex items-center pl-[3px] text-[#222]">
            <Ico k="earth" s={12} />
            <div className="ml-[5px] flex">
                {menuBar.map(([t, w]) => <span key={t} className={w}><Mn t={t} /></span>)}
            </div>
            <span className="w-[43px] h-[16px] ml-px border border-[#f0f0f0] border-r-[#888] border-b-0 flex items-center justify-center"><Mn t="&Preferences" /></span>
            <span className="ml-[6px] w-[37px]">Wind<u>o</u>w</span>
            <span><u>H</u>elp</span>
            <div className="ml-auto mr-[1px] flex gap-px">
                {['_', '❐'].map((t) => <Btn key={t} className="w-[11px] h-[11px] text-[8px] leading-none font-bold text-black">{t}</Btn>)}
                <Btn className="w-[11px] h-[11px] text-[8px] leading-none text-[#999]">×</Btn>
            </div>
        </div>
        {/* first tool row */}
        <div className="h-[46px] shrink-0 flex border-t border-[#a8a59e]">
            <div className="w-[445px] flex items-center pl-[5px] pb-[4px] shrink-0 border-r border-[#a8a59e]">
                <Ico k="earth" s={15} />
                <span className="ml-[3px] w-[29px] text-[#222] whitespace-nowrap">Start ▾</span>
                <div className="w-[21px] h-[21px] flex items-center justify-center bg-[#e6e4df] border border-[#909090]"><Ico k="cube" s={15} /></div>
                <div className="w-[22px] flex justify-center"><Ico k="doc" s={15} /></div>
                <div className="w-[24px] flex justify-center"><Ico k="folder" s={15} /></div>
                <div className="w-[22px] flex justify-center"><Ico k="disk" s={13} /></div>
                <Sep />
                {['scissors', 'copy', 'paste', 'cross', 'undo'].map((k, i) => <div key={i} className="w-[22px] flex justify-center shrink-0"><Ico k={k} s={14} /></div>)}
                <Sep />
                {['info', 'wand'].map((k, i) => <div key={i} className="w-[23px] flex justify-center shrink-0"><Ico k={k} s={15} /></div>)}
            </div>
            <div className="flex border-b border-r border-[#a8a59e] pt-[1px] pl-[2px] pr-[1px] w-[238px] relative">
                <TopTool k="tabular" a="Tabular" b="Note" dim />
                <TopTool k="parts" a="Parts List" />
                <TopTool k="importAttr" a="Import" b="Attributes" />
                <span className="mt-[14px] ml-px"><Drop /></span>
                <div className="w-[2px] h-[44px] -mt-[1px] bg-[#a8a59e] border-r border-white ml-[5px]" />
                <TopTool k="balloon" a="Auto" b="Balloon" className="ml-[1px]" />
                <TopTool k="exportI" a="Export" />
                <span className="ml-[8px] mt-[36px]"><Drop /></span>
            </div>
        </div>
        {/* second tool row */}
        <div className="h-[25px] shrink-0 flex">
            <div className="w-[642px] flex items-center pl-[5px] border-b-2 border-r border-[#a8a59e] shrink-0">
                {['asmPlus', 'asmPlus', 'mate', 'repos', 'asm', 'view', 'grayFlat', 'zoom', 'magnify', 'rotate', 'shade', 'gray'].map((k, i) => (
                    <div key={i} className="w-[20.6px] flex justify-center shrink-0"><Ico k={k} s={15} /></div>
                ))}
                <Sep />
                <div className="w-[20px] flex justify-center"><Ico k="gray" s={16} /></div>
                <Drop />
                <div className="w-[130px]" />
                <Ico k="gray" s={13} />
                <span className="ml-[2px]"><Drop /></span>
                <span className="ml-[5px] mt-[9px]"><Drop /></span>
                <div className="ml-[6px] mr-[2px] self-stretch flex"><Sep /></div>
                {['line', 'line', 'wave', 'ccross', 'ring', 'ringOnly', 'plus'].map((k, i) => (
                    <div key={i} className="w-[21.7px] flex justify-center shrink-0"><Ico k={k} s={16} /></div>
                ))}
                <span className="ml-[3px] mt-[9px]"><Drop /></span>
            </div>
        </div>
        {/* status line */}
        <div className="h-[14px] shrink-0 flex items-center pl-px font-bold text-[#111] border-b border-[#eee]">
            <span>Set color options</span>
            <span className="ml-auto mr-[25px] w-[14px] h-full border-x border-[#a8a59e]" />
        </div>
        {/* work area */}
        <div className="flex-1 min-h-0 flex">
            <div className="w-[32px] shrink-0 flex flex-col items-start pl-[4px] pt-[5px] relative">
                {leftBar.map((k, i) => {
                    if (k === 'arrow') return <div key={i} className="h-[16px] -ml-[4px] flex items-center text-[8px] font-bold shrink-0">‹</div>;
                    if (k === 'sep3') return <div key={i} className="w-[25px] -ml-[2px] h-[3px] border-b border-[#a8a59e] shrink-0" />;
                    if (k === 'sep4') return <div key={i} className="w-[25px] -ml-[2px] h-[4px] border-b border-[#a8a59e] shrink-0" />;
                    if (k === 'sep5') return <div key={i} className="w-[25px] -ml-[2px] h-[5px] border-b border-[#a8a59e] shrink-0" />;
                    return <div key={i} className="h-[21.8px] flex items-center shrink-0"><Ico k={k} s={19} /></div>;
                })}
                <div className="mt-auto mb-[2px] text-[8px] font-bold flex gap-[16px] -ml-[1px]"><span>‹</span><span>»</span></div>
            </div>
            <div className="w-[718px] shrink-0 relative bg-linear-to-b from-[#1f1f50] via-[#14487c] to-[#0c6ba0] border-t-2 border-[#8a7f80]">
                <Model />
                <VisDialog />
                <div className="absolute left-[1px] bottom-[1px] text-[#a02a20] text-[8px]">Color Palette</div>
            </div>
            {/* part navigator */}
            <div className="w-[3px] shrink-0 bg-[#efeee9]" />
            <div className="w-[125px] shrink-0 flex flex-col px-[3px] pt-[3px]">
                <div className="h-[13px] flex justify-between items-center font-bold text-[#111] pr-[6px] text-[8px]">
                    <span>Part Navigator</span>
                    <Ico k="pin" s={9} />
                </div>
                <div className="mt-[2px] h-[11px] pl-[4px] text-[#333] leading-[10px] border-b border-[#333]">Name</div>
                <div className="h-[208px] bg-white pt-[2px] -mr-[1px] text-[#303030]">
                    {treeRows.map(([k, t]) => (
                        <div key={t} className="h-[11.3px] flex items-center pl-[3px] gap-[2px]"><PlusBox /><Ico k={k} s={11} /><span>{t}</span></div>
                    ))}
                    <div className="h-[11.3px] flex items-center pl-[3px] gap-[3px]"><PlusBox minus /><span>Reference Sets</span></div>
                    <div className="h-[11.3px] flex items-center pl-[20px] gap-px"><Ico k="tick" s={8} /><Ico k="model" s={10} /><span>Model</span></div>
                </div>
                <Scrollbar thumb="w-[40px]" />
                <div className="h-[5px] flex justify-center"><div className="w-[41px] h-[4px] bg-white border-x border-[#808080]" /></div>
                <SectionHead t="Dependencies" className="mt-[3px] mr-[9px]" />
                <div className="mt-[2px] mr-[9px] h-[104px] border-x border-b border-[#a0a0a0] flex pl-[5px] pt-[1px] gap-[2px]">
                    <div className="w-[82px] h-[97px] bg-white border border-t-[#808080] border-l-[#808080] border-white" />
                    <div className="flex flex-col gap-[3px]">
                        <Btn className="w-[19px] h-[18px]"><Ico k="lens" s={15} /></Btn>
                        <Btn className="w-[19px] h-[18px]"><span className="text-[#777] text-[14px] leading-none">➨</span></Btn>
                        <Btn className="w-[19px] h-[18px]"><span className="text-[#777] text-[14px] leading-none rotate-180">➨</span></Btn>
                        <Btn className="w-[19px] h-[20px]"><div className="w-[13px] h-[12px] border border-dashed border-[#888]" /></Btn>
                    </div>
                </div>
                <SectionHead t="Details" className="mt-[3px] mr-[9px]" />
                <div className="mt-[2px] mr-[7px] h-[104px] border-x border-b border-[#a0a0a0] pl-[5px] pt-[2px]">
                    <div className="w-[102px] h-[98px] bg-white border border-t-[#808080] border-l-[#808080] border-white flex flex-col">
                        <div className="h-[12px] flex bg-[#d4d0c8] text-[#333] leading-[11px]">
                            <div className="w-[61px] pl-[4px] border-r border-[#808080] border-b">Parameter</div>
                            <div className="flex-1 pl-[4px] border-b border-[#808080]">Value</div>
                        </div>
                        <div className="flex-1" />
                        <Scrollbar thumb="w-[46px]" />
                    </div>
                </div>
                <SectionHead t="Preview" className="mt-[3px] mr-[9px]" />
            </div>
            <div className="flex-1 bg-[#808080] flex flex-col items-start pl-px">
                {tabs.map(([k, c]) => (
                    <div key={k} className={`w-[19px] bg-[#d4d0c8] flex items-center justify-center ${c}`}><Ico k={k} s={17} /></div>
                ))}
            </div>
        </div>
        {/* lower tool rows */}
        <div className="h-[45px] shrink-0 flex border-t border-[#eee]">
            <div className="flex w-[683px] shrink-0 pl-[5px] pt-[1px] border-r border-b border-[#a8a59e] relative">
                {lowerTools.map((t, i) => {
                    if (t === 'sep') return <div key={i} className="w-[2px] mx-px -mt-[1px] h-[44px] bg-[#a8a59e] border-r border-white" />;
                    if (t === 'sepw') return <div key={i} className="w-[2px] mx-[2px] -mt-[1px] h-[44px] bg-[#a8a59e] border-r border-white" />;
                    const [k, a, b] = t as [string, string, string];
                    return <TopTool key={i} k={k} a={a} b={b} />;
                })}
                <span className="mt-[36px] ml-[2px]"><Drop /></span>
                <div className="ml-[2px] flex -mt-[1px]"><Sep /><Sep /></div>
                <TopTool k="curve" a="Curve" b="Toolbar" />
                <div className="w-[2px] mx-px -mt-[1px] h-[44px] bg-[#a8a59e] border-r border-white" />
                <TopTool k="sheet" a="Sheet" b="Metal" />
                <TopTool k="direct" a="Direct" b="Modeling" />
                <span className="ml-[8px] mt-[36px]"><Drop /></span>
            </div>
        </div>
        <div className="h-[25px] shrink-0 flex">
            <div className="w-[494px] flex items-center pl-[7px] border-r border-b border-[#a8a59e]">
                {lowerRow2.map((k, i) => k ? (
                    <div key={i} className="w-[21.5px] flex justify-center shrink-0"><Ico k={k} s={15} /></div>
                ) : i === 3 ? <Sep key={i} /> : <Sep2 key={i} />)}
                <span className="mt-[9px] ml-[1px]"><Drop /></span>
            </div>
        </div>
        {/* task bar */}
        <div className="h-[22px] shrink-0 flex items-center gap-[3px] pl-px text-[#222] border-t border-[#fff] whitespace-nowrap">
            <Btn className="w-[37px] h-[18px] font-bold gap-px"><Ico k="flag" s={10} />Start</Btn>
            <Btn className="w-[112px] h-[18px] !justify-start pl-[2px] gap-[3px] ml-px"><Ico k="outlook" s={12} />Inbox - Microsoft Outlook</Btn>
            <Btn className="w-[110px] h-[18px] !justify-start pl-[2px] gap-[3px]"><Ico k="mail" s={11} />4534556 Bio 1HY/08  MT ...</Btn>
            <div className="w-[113px] h-[18px] flex items-center pl-[2px] gap-[2px] font-bold bg-[#e6e4df] border border-t-[#555] border-l-[#555] border-white"><Ico k="nx" s={11} />NX 4 - Modeling - [ses...</div>
            <Btn className="w-[110px] h-[18px] !justify-start pl-[2px] gap-[3px]"><Ico k="winFolder" s={11} />C:\Files\czTomBoh\syste...</Btn>
            <Btn className="w-[113px] h-[18px] !justify-start pl-[2px] gap-[3px]"><Ico k="grabber" s={12} />Audiograbber</Btn>
            <div className="ml-auto mr-[2px] flex items-center">
                <div className="w-[10px] h-[12px] bg-[#14408a] text-white text-[6px] leading-[12px] text-center">CZ</div>
                <div className="ml-[1px] w-[80px] h-[18px] flex items-center border border-t-[#808080] border-l-[#808080] border-white pl-[3px] gap-[2px]">
                    <span className="font-bold">«</span>
                    <span className="w-[10px] h-[10px] rounded-full bg-[#38c030] text-white text-[7px] leading-[10px] text-center font-bold">i</span>
                    <Ico k="doc" s={11} />
                    <Ico k="help" s={11} />
                    <span className="ml-auto mr-[5px]">7:23</span>
                </div>
            </div>
        </div>
        <PrefMenu />
    </div>
);

export default function App() {
    return (
        <div className="w-[960px] h-[1363px] bg-white flex flex-col font-['DejaVu_Sans',sans-serif] text-[#111] overflow-hidden">
            <div className="h-[26px] pl-[22px] flex items-end text-[#4f9a7c] text-[16.4px] shrink-0">
                <span className="tracking-[-0.15px] mb-[-2px] leading-[26px]">Česká zemědělská univerzita v praze - </span>
                <span className="ml-[5px] font-['Liberation_Sans',sans-serif] font-bold text-[23.6px] leading-[26px] text-[#2f8a62]">manuál</span>
            </div>
            <div className="mt-[6px] ml-[22px] h-[85px] shrink-0"><Logo /></div>
            <div className="mt-[22px] ml-px w-[948px] h-[58px] shrink-0 flex border-[1.5px] border-[#222] text-[16.3px]">
                <TableCell className="w-[151px]">Název produktu</TableCell>
                <TableCell className="w-[453px]"><span className="w-[400px]">Unigraphics NX4_uživatelská příručka pro začátečníky</span></TableCell>
                <TableCell className="w-[80px]">Vytvořil</TableCell>
                <TableCell className="w-[100px]"><span className="w-[80px]">Tomáš Boháček</span></TableCell>
                <TableCell className="w-[82px]">V Praze</TableCell>
                <TableCell className="flex-1"><span className="w-[70px]">10/200 7</span></TableCell>
            </div>
            <div className="mt-[6px] ml-[22px] h-[24px] shrink-0 text-[21px] leading-[24px] font-bold underline tracking-[-0.9px] font-['Open_Sans',sans-serif]">PREFERENCES:</div>
            <ul className="mt-[35px] ml-[53px] w-[850px] shrink-0 text-[19.4px] leading-[31px]">
                {bullets.map((b) => (
                    <li key={b} className="flex">
                        <span className="w-[30px] shrink-0 flex pt-[12px]"><span className="w-[8px] h-[8px] rounded-full bg-black" /></span>
                        <span>{b}</span>
                    </li>
                ))}
            </ul>
            <div className="mt-[31px] shrink-0"><Screenshot /></div>
            <div className="mt-auto pl-[22px] pb-[1px] font-['Liberation_Sans',sans-serif] text-[15px] leading-[17px] text-[#111] tracking-[-0.56px]">Tomáš Boháček, SMAD 2.ročník – distanční studium</div>
        </div>
    );
}
